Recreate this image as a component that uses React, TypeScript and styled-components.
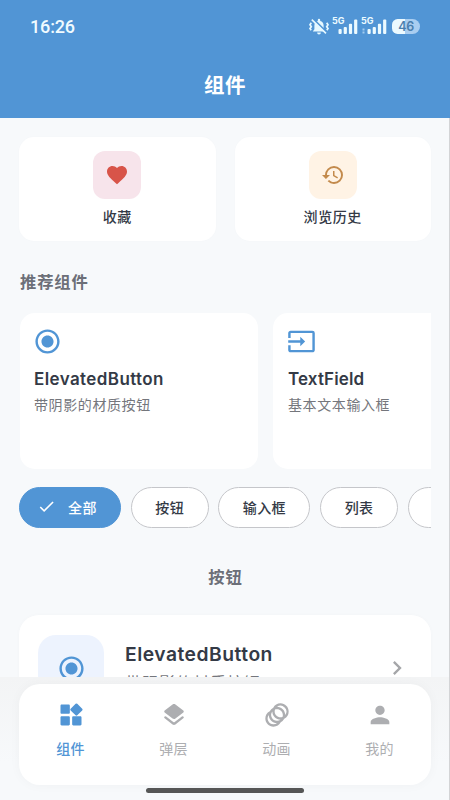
import React from 'react';
import styled, { createGlobalStyle } from 'styled-components';
import {
  MdAnimation,
  MdCheck,
  MdChevronRight,
  MdFavorite,
  MdHistory,
  MdInput,
  MdPerson,
  MdRadioButtonChecked,
} from 'react-icons/md';

const BLUE = '#5195d5';
const INK = '#343a46';
const MUTED = '#74767c';

const GlobalStyle = createGlobalStyle`
  * { box-sizing: border-box; }
  body {
    margin: 0;
    font-family: Inter, "Noto Sans CJK SC", sans-serif;
    color: ${INK};
  }
  svg { display: block; flex: none; overflow: visible; }
`;

const Screen = styled.div`
  position: relative;
  display: flex;
  flex-direction: column;
  width: 450px;
  height: 800px;
  overflow: hidden;
  background: #f7f9fb;
`;

const Header = styled.header`
  flex: none;
  height: 118px;
  background: ${BLUE};
  color: #fff;
`;

const StatusBar = styled.div`
  display: flex;
  justify-content: space-between;
  align-items: center;
  height: 54px;
  padding: 0 30px 0 30px;
`;

const Clock = styled.span`
  font: 500 18px/24px Roboto, sans-serif;
  letter-spacing: -0.15px;
  color: #f0fbff;
`;

const StatusIcons = styled.div`
  display: flex;
  align-items: center;
`;

const Battery = styled.div`
  width: 28px;
  height: 15px;
  margin: -2px 0 0 5px;
  border-radius: 6px 8px 8px 6px;
  background: linear-gradient(90deg, #ecfaff 0 46%, #a9cdf0 46%);
  color: #4b7fae;
  font: 600 12.5px/15px Inter, sans-serif;
  letter-spacing: -0.5px;
  text-align: center;
`;

const PageTitle = styled.h1`
  margin: 16px 0 0;
  font-size: 20.5px;
  line-height: 31px;
  font-weight: 700;
  letter-spacing: 0.6px;
  text-align: center;
`;

const Content = styled.main`
  flex: none;
  height: 559px;
  padding: 19px 19px 0 20px;
  overflow: hidden;
`;

const Shortcuts = styled.div`
  display: grid;
  grid-template-columns: 1fr 1fr;
  gap: 19px;
  margin-left: -1px;
`;

const ShortcutCard = styled.div`
  display: flex;
  flex-direction: column;
  align-items: center;
  height: 104px;
  padding-top: 14px;
  border-radius: 15px;
  background: #fff;
  box-shadow: 0 0 3px rgba(30, 50, 80, 0.015);
`;

const IconTile = styled.div<{ $bg: string; $fg: string; $size?: number }>`
  display: flex;
  flex: none;
  align-items: center;
  justify-content: center;
  width: ${(p) => p.$size ?? 48}px;
  height: ${(p) => p.$size ?? 48}px;
  border-radius: ${(p) => (p.$size ? 18 : 12)}px;
  background: ${(p) => p.$bg};
  color: ${(p) => p.$fg};
`;

const ShortcutLabel = styled.span`
  margin-top: 7px;
  font-size: 14px;
  line-height: 22px;
  font-weight: 500;
  letter-spacing: 0.6px;
`;

const SectionTitle = styled.h2<{ $center?: boolean }>`
  margin: ${(p) => (p.$center ? '37px 0 0' : '29px 0 0')};
  font-size: 16.3px;
  line-height: 24px;
  font-weight: 700;
  letter-spacing: 0.9px;
  color: #6c6f78;
  text-align: ${(p) => (p.$center ? 'center' : 'left')};
`;

const Carousel = styled.div`
  display: flex;
  gap: 15px;
  margin-top: 19px;
  overflow: hidden;
`;

const FeatureCard = styled.article`
  flex: none;
  width: 238px;
  height: 156px;
  padding: 14px;
  border-radius: 15px;
  background: #fff;
  svg { color: ${BLUE}; }

  & + & { padding-left: 15px; }
`;

const FeatureName = styled.h3<{ $tight?: boolean }>`
  margin: 10px 0 0;
  font-size: 17px;
  line-height: 26px;
  font-weight: 600;
  letter-spacing: ${(p) => (p.$tight ? 0.12 : 0.4)}px;
  white-space: nowrap;
`;

const FeatureText = styled.p`
  margin: 2px 0 0;
  font-size: 14px;
  line-height: 22px;
  letter-spacing: 0.6px;
  color: ${MUTED};
`;

const FeatureIcon = styled.div`
  margin-left: -1px;
  width: 29px;
`;

const Chips = styled.div`
  display: flex;
  gap: 9.7px;
  margin: 18px 0 0 -1px;
  overflow: hidden;
`;

const Chip = styled.div<{ $w: number; $active?: boolean }>`
  display: flex;
  flex: none;
  align-items: center;
  justify-content: center;
  gap: 12px;
  width: ${(p) => p.$w}px;
  height: 41px;
  padding: 0 ${(p) => (p.$active ? 6 : 0)}px 2px 0;
  border: 1px solid ${(p) => (p.$active ? BLUE : '#c5c6ca')};
  border-radius: 21px;
  background: ${(p) => (p.$active ? BLUE : '#fff')};
  color: ${(p) => (p.$active ? '#fff' : INK)};
  font-size: 14px;
  font-weight: 500;
  letter-spacing: 0.4px;
`;

const ListCard = styled.article`
  display: flex;
  height: 106px;
  margin: 26px 0 0 -1px;
  padding: 20px 20px 0 19px;
  border-radius: 20px;
  background: #fff;
  box-shadow: 0 0 5px rgba(30, 50, 80, 0.02);
`;

const ListBody = styled.div`
  flex: 1;
  padding-left: 21px;
`;

const ListName = styled.h3`
  margin: 4px 0 0;
  font-size: 19.3px;
  line-height: 30px;
  font-weight: 600;
  letter-spacing: 0.5px;
`;

const ListText = styled.p`
  margin: 2px 0 0;
  font-size: 16px;
  line-height: 24px;
  letter-spacing: 1px;
  color: ${MUTED};
`;

const Arrow = styled.div`
  display: flex;
  align-items: center;
  height: 66px;
  color: #a5a6a9;
`;

const NavArea = styled.footer`
  flex: 1;
  padding: 7px 19px 0;
  background: linear-gradient(#f3f4f5, #f7f9fb 70%);
`;

const NavBar = styled.nav`
  display: grid;
  grid-template-columns: repeat(4, 1fr);
  height: 101px;
  border-radius: 21px;
  background: #fff;
  box-shadow: 0 0 12px rgba(20, 30, 50, 0.035);
`;

const NavItem = styled.div<{ $active?: boolean }>`
  display: flex;
  flex-direction: column;
  align-items: center;
  padding-top: 17px;
  color: ${(p) => (p.$active ? BLUE : '#adaeb1')};
  font-size: 14px;
  line-height: 22px;
  font-weight: ${(p) => (p.$active ? 500 : 400)};
  letter-spacing: 0.3px;
`;

const NavLabel = styled.span`
  margin-top: 9px;
`;

const HomeIndicator = styled.div`
  position: absolute;
  left: 146px;
  bottom: 7px;
  width: 158px;
  height: 5px;
  border-radius: 3px;
  background: #565656;
`;

const EdgeLine = styled.div`
  position: absolute;
  top: 118px;
  right: 0;
  bottom: 0;
  width: 1px;
  background: #d3d4d6;
`;

const SignalText = styled.text`
  font: 700 9px Inter, sans-serif;
  fill: #ecfaff;
`;

const MutedBell = () => (
  <svg width="20" height="18" viewBox="0 0 20 18" fill="none">
    <path d="M3.8 13.6h12.4l-1.6-2.3V7.2A4.6 4.6 0 0 0 11.2 3V2a1.2 1.2 0 0 0-2.4 0v1a4.6 4.6 0 0 0-3.4 4.2v4.1zM8.1 14.6h3.8a1.9 1.9 0 0 1-3.8 0z" fill="#e6f8ff" />
    <path d="M2.3 4.8 1 6.7l1.3 2L1 10.6l1.2 1.6M17.7 4.8 19 6.7l-1.3 2 1.3 1.9-1.2 1.6" stroke="#e6f8ff" strokeWidth="1.7" />
    <path d="m4.6 1.5 13 12.6" stroke={BLUE} strokeWidth="2" />
    <path d="m2.8 1.7 14.2 13.6" stroke="#e6f8ff" strokeWidth="1.6" />
  </svg>
);

const Signal = ({ dual }: { dual?: boolean }) => (
  <svg width="29" height="20" viewBox="0 0 29 20">
    <SignalText x="3" y="7.3">5G</SignalText>
    {dual && <path d="M4.5 11.5h2v2h-2zM4.5 14.5h2v2h-2z" fill="#a2ccef" />}
    <g fill="#ecfaff">
      <rect x="9.5" y="12" width="3.2" height="5" rx="1" />
      <rect x="14.7" y="10" width="3.2" height="7" rx="1" />
      <rect x="19.9" y="6.8" width="3.2" height="10.2" rx="1" />
      <rect x="25.1" y="2.5" width="3.2" height="14.5" rx="1" />
    </g>
  </svg>
);

const WidgetsIcon = () => (
  <svg width="28" height="28" viewBox="0 0 24 24" fill="currentColor">
    <path d="M13 14v6c0 .55.45 1 1 1h6c.55 0 1-.45 1-1v-6c0-.55-.45-1-1-1h-6c-.55 0-1 .45-1 1zm-9 7h6c.55 0 1-.45 1-1v-6c0-.55-.45-1-1-1H4c-.55 0-1 .45-1 1v6c0 .55.45 1 1 1zM3 4v6c0 .55.45 1 1 1h6c.55 0 1-.45 1-1V4c0-.55-.45-1-1-1H4c-.55 0-1 .45-1 1zm12.95-1.6L11.7 6.64a.996.996 0 0 0 0 1.41l4.25 4.25c.39.39 1.02.39 1.41 0l4.25-4.25a.996.996 0 0 0 0-1.41L17.37 2.4a.996.996 0 0 0-1.42 0z" />
  </svg>
);

const LayersIcon = () => (
  <svg width="28" height="28" viewBox="0 0 24 24" fill="currentColor">
    <path d="M12.6 18.06c-.36.28-.87.28-1.23 0l-6.15-4.78a.991.991 0 0 0-1.22 0 .99.99 0 0 0 0 1.57l6.76 5.26c.72.56 1.73.56 2.46 0l6.76-5.26a.99.99 0 0 0 0-1.57l-.01-.01a.991.991 0 0 0-1.22 0l-6.15 4.79zm.63-3.02 6.76-5.26c.51-.4.51-1.18 0-1.58l-6.76-5.26c-.72-.56-1.73-.56-2.46 0L4.01 8.21c-.51.4-.51 1.18 0 1.58l6.76 5.26c.72.56 1.74.56 2.46-.01z" />
  </svg>
);

export default function App() {
  return (
    <>
      <GlobalStyle />
      <Screen>
        <Header>
          <StatusBar>
            <Clock>16:26</Clock>
            <StatusIcons>
              <MutedBell />
              <Signal />
              <Signal dual />
              <Battery>46</Battery>
            </StatusIcons>
          </StatusBar>
          <PageTitle>组件</PageTitle>
        </Header>
        <Content>
          <Shortcuts>
            <ShortcutCard>
              <IconTile $bg="#f7e4eb" $fg="#d85449"><MdFavorite size={24} /></IconTile>
              <ShortcutLabel>收藏</ShortcutLabel>
            </ShortcutCard>
            <ShortcutCard>
              <IconTile $bg="#fff3e5" $fg="#c38a4c"><MdHistory size={24} /></IconTile>
              <ShortcutLabel>浏览历史</ShortcutLabel>
            </ShortcutCard>
          </Shortcuts>
          <SectionTitle>推荐组件</SectionTitle>
          <Carousel>
            <FeatureCard>
              <FeatureIcon><MdRadioButtonChecked size={29} /></FeatureIcon>
              <FeatureName>ElevatedButton</FeatureName>
              <FeatureText>带阴影的材质按钮</FeatureText>
            </FeatureCard>
            <FeatureCard>
              <FeatureIcon><MdInput size={29} /></FeatureIcon>
              <FeatureName $tight>TextField</FeatureName>
              <FeatureText>基本文本输入框</FeatureText>
            </FeatureCard>
          </Carousel>
          <Chips>
            <Chip $w={102} $active><MdCheck size={19} />全部</Chip>
            <Chip $w={78}>按钮</Chip>
            <Chip $w={92}>输入框</Chip>
            <Chip $w={78}>列表</Chip>
            <Chip $w={78} />
          </Chips>
          <SectionTitle $center>按钮</SectionTitle>
          <ListCard>
            <IconTile $bg="#edf3fe" $fg={BLUE} $size={66}><MdRadioButtonChecked size={29} /></IconTile>
            <ListBody>
              <ListName>ElevatedButton</ListName>
              <ListText>带阴影的材质按钮</ListText>
            </ListBody>
            <Arrow><MdChevronRight size={28} /></Arrow>
          </ListCard>
        </Content>
        <NavArea>
          <NavBar>
            <NavItem $active><WidgetsIcon /><NavLabel>组件</NavLabel></NavItem>
            <NavItem><LayersIcon /><NavLabel>弹层</NavLabel></NavItem>
            <NavItem><MdAnimation size={28} /><NavLabel>动画</NavLabel></NavItem>
            <NavItem><MdPerson size={28} /><NavLabel>我的</NavLabel></NavItem>
          </NavBar>
        </NavArea>
        <EdgeLine />
        <HomeIndicator />
      </Screen>
    </>
  );
}
